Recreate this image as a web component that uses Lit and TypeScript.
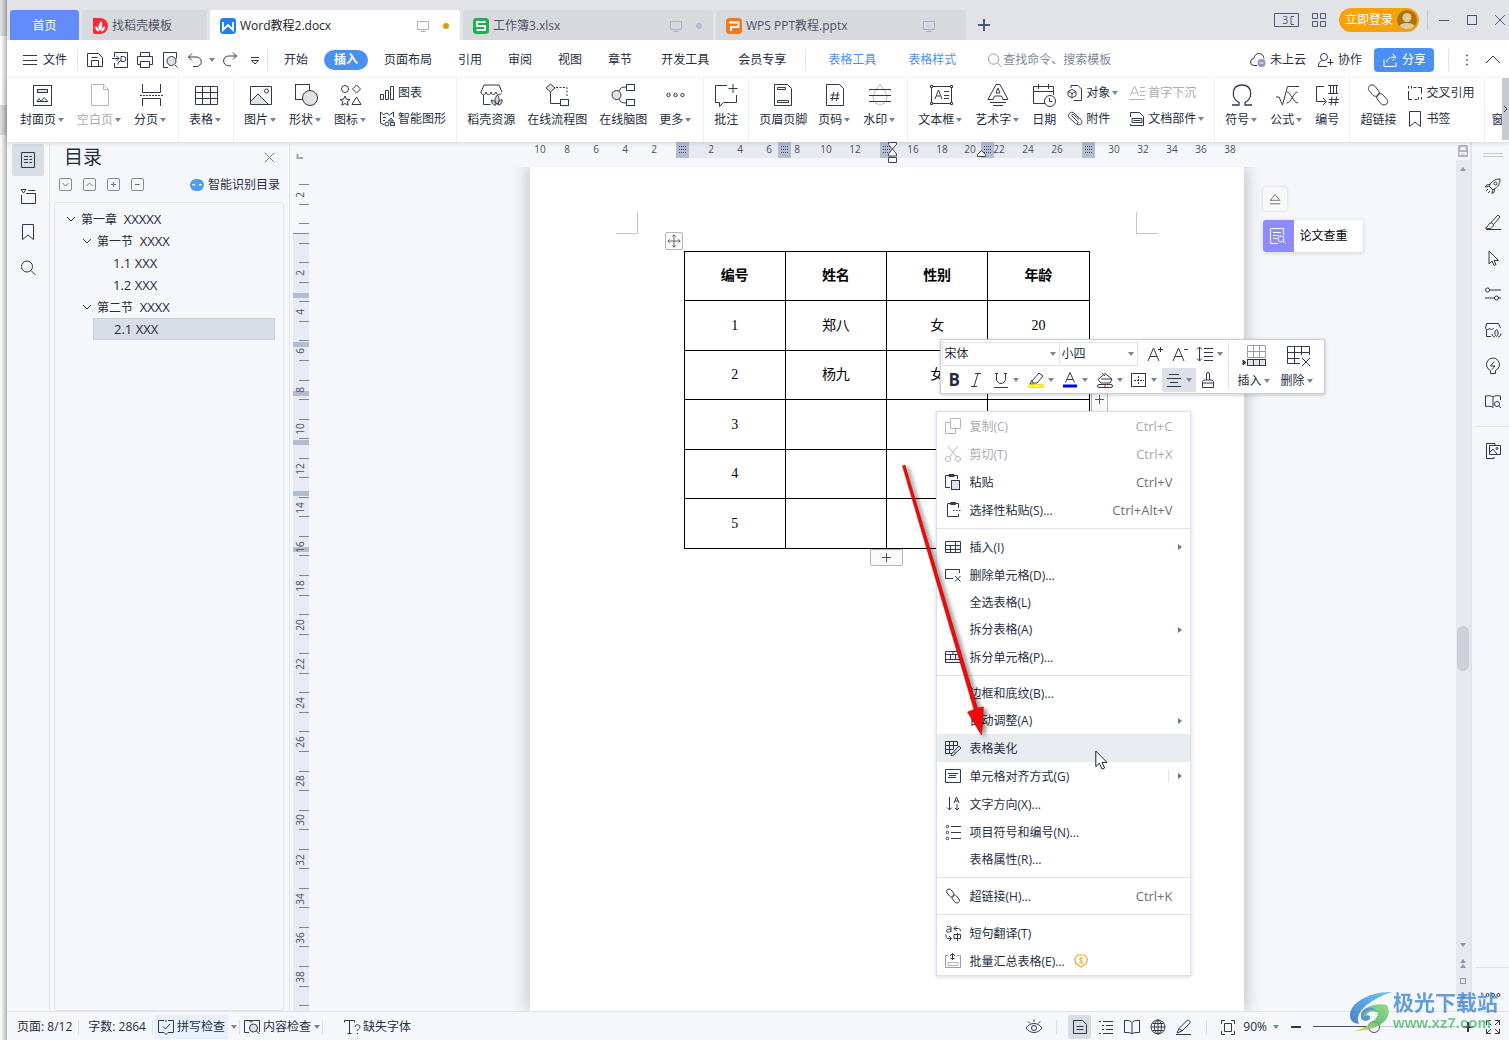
import { LitElement, html, svg, css, nothing, TemplateResult } from "lit";
import { customElement } from "lit/decorators.js";
import { classMap } from "lit/directives/class-map.js";

type Glyph = ReturnType<typeof svg>;

/* Large ribbon glyphs, drawn on a 24 x 24 grid */
const big: Record<string, Glyph> = {
  cover: svg`<rect x="2.5" y="2.5" width="18" height="20"/><rect x="6.5" y="6.5" width="10" height="3" fill="#dfe1e5"/><path d="M6 18.5h4l-2-3-2 3M10 18.5l3-4 4 4z"/>`,
  blank: svg`<path d="M3.5 1.5h12l5 5v16h-17zM15.5 1.5v5h5" stroke="#b4b6ba"/>`,
  pagebreak: svg`<path d="M3.5 1v8.500h18V1M3.5 23v-7.500h18V23"/><path d="M1 12.5h23" stroke-dasharray="2 1"/>`,
  table: svg`<path d="M1.5 3.5h22v18h-22zM1.5 9.5h22M1.5 15.5h22M8.5 9.5v12M16.5 3.5v18M8.5 3.5v6"/>`,
  picture: svg`<path d="M2 18l7-7 10 10H2z" fill="#dfe1e5" stroke="none"/><path d="M1.5 3.5h21v18h-21zM2 18l7-7 10 10"/><circle cx="17.5" cy="8" r="2"/>`,
  shapes: svg`<rect x="1.5" y="1.5" width="14" height="15"/><circle cx="16" cy="15" r="7.5" fill="#dfe1e5"/>`,
  icons: svg`<circle cx="6" cy="6" r="3.5"/><path d="M17.5 2l4 4-4 4-4-4zM17.5 14l4.5 7.500h-9zM6 13l1.500 3.200 3.500.3-2.700 2.300.9 3.500L6 20.500l-3.200 1.800.9-3.500L1 16.500l3.500-.3z"/>`,
  store: svg`<path d="M4.500 12v9.500h7M2 9l3-7h15l3 7M2 9c0 3.500 5 3.500 5 0 0 3.500 5 3.500 5 0 0 3 4 3.500 5 0 0 3 5 3.500 5.500 1"/><path d="M18 21c-3-2-2.500-6 .5-9 2 3 2.500 6-.5 9zM17 22c-3 .5-4.500-2-4.500-5 3 .5 4.500 2 4.500 5zM19 22c0-3 1.500-5 4-5.500.5 3-1 5.500-4 5.500z" fill="#d4d6db"/>`,
  flow: svg`<path d="M5.500 1l4.500 4-4.500 4L1 5z" fill="#dfe1e5"/><path d="M5.500 9v11.500h10"/><path d="M11 4.500h11v10" stroke-dasharray="2 1.500"/><rect x="15.500" y="16.500" width="8" height="6"/>`,
  mind: svg`<circle cx="5.500" cy="12" r="4.500" fill="#dfe1e5"/><path d="M8 8c1-3 3-4 7-4M8 16c1 3 3 4 7 4"/><rect x="15.500" y="1.500" width="8" height="6"/><rect x="15.500" y="16.500" width="8" height="6"/>`,
  more: svg`<circle cx="4.500" cy="12" r="1.700"/><circle cx="11.500" cy="12" r="1.700"/><circle cx="18.500" cy="12" r="1.700"/>`,
  comment: svg`<path d="M13 2.500H1.500v17h4v4l4-4h13V12M19 1v9M14.500 5.500h9"/>`,
  header: svg`<path d="M3.500 1.500h13l4 4v17h-17z"/><path d="M6.500 4.500h8v2h-8zM6.500 17.500h11v2h-11z"/>`,
  pageno: svg`<path d="M3.500 1.500h13l4 4v17h-17z"/><path d="M10.500 9l-1.500 9M15 9l-1.500 9M7.500 12h9M7 15.500h9"/>`,
  watermark: svg`<path d="M12 1c3 5 7 9 7 13.500a7 7 0 0 1-14 0C5 10 9 6 12 1z" stroke="#b4b6ba"/><path d="M1 6.500h22M1 12.500h22M1 18.500h22"/>`,
  textbox: svg`<rect x="2.500" y="3.500" width="20" height="17"/><path d="M1.500 2.500h2v2h-2zM21.500 2.500h2v2h-2zM1.500 19.500h2v2h-2zM21.500 19.500h2v2h-2z" fill="#fff"/><path d="M6 16l3.500-9L13 16M7.500 13h4M15 8.500h5M15 12.500h5M15 15.500h5"/>`,
  wordart: svg`<path d="M2 16.500L10 1.500h4l8 15h-5l-1.500-3.500h-7L7 16.500zM10 10l2-5 2 5zM4 19.500h16M7 22.500h10"/>`,
  date: svg`<path d="M14 20.500H1.500v-17h20V12M1.500 8.500h20M6.500 1v5M16.500 1v5"/><circle cx="18" cy="18" r="5.500" fill="#fff"/><path d="M17.500 15v3.500h3"/>`,
  omega: svg`<path d="M2 22h7v-2.500C1 16 1 2 12 2s11 14 3 17.500V22h7" stroke-width="1.300"/>`,
  formula: svg`<path d="M1 14h3l3.500 8L12.500 3.500H24M12 9c4 0 6 11 11 11M22.500 9c-4 0-6 11-11 11"/>`,
  numbering: svg`<path d="M9 3.500H1.500v15h9M8 15l3.500 3.500L8 22M13 2.500h10M13 10.500h10M15.500 2.500v8M18.500 2.500v8M21.500 2.500v8M17 13.500l-1 9M21.500 13.500l-1 9M14 16.500h10M13.500 19.500h10"/>`,
  link: svg`<path d="M12.500 12.500c-2 1.500-4.500 1-6-1L3 7.500C1.500 5 3 2 6 2c1.500 0 2.500.6 3.300 1.600l3.200 4c1 1.500 1 3 0 4.500M11.500 11.500c2-1.500 4.500-1 6 1l3.500 4c1.500 2.500 0 5.500-3 5.500-1.500 0-2.500-.6-3.300-1.600l-3.200-4c-1-1.500-1-3 0-4.500"/>`,
  insertrow: svg`<path d="M4.500 2.500h18v12h-18zM4.500 8.500h18M10.500 2.500v12M16.500 2.500v12" stroke="#9a9ea8"/><rect x="4.500" y="16.500" width="18" height="6" fill="#e3e5e8"/><path d="M10.500 16.500v6M16.500 16.500v6"/><path d="M0 17l3 2.500L0 22z" fill="#2f384c"/>`,
  delrow: svg`<path d="M14 20.500H1.500v-17h22V12M1.500 9.500h22M1.500 15.500h12M8.500 3.500v17M15.500 3.500V12M16 15l8 8M24 15l-8 8"/>`,
};

/* Small glyphs, drawn on a 16 x 16 grid */
const small: Record<string, Glyph> = {
  burger: svg`<path d="M1 3.500h14M1 8.500h14M1 12.500h14"/>`,
  save: svg`<path d="M.500 14.500V1.500h11l4 4v9zM4.500 14.500v-6h7v6M4.500 5.500h6"/>`,
  export: svg`<path d="M2.500 5V.500h13v15h-13V11M0 6.500h7M4.500 4L7 6.500 4.500 9M6 12.500V11l3-3M9 4.500h2.500a2 2 0 0 1 0 5H9z"/>`,
  print: svg`<path d="M3.500 4V.500h9V4M3.500 12.500H.500v-8h15v8h-3M3.500 9.500h9v6h-9z"/>`,
  preview: svg`<path d="M6 15.500H1.500V.500h13v6M13 13l2.500 2.500"/><circle cx="9.500" cy="9" r="4.500" fill="#dfe1e5"/>`,
  undo: svg`<path d="M5 1.500L1.500 5 5 8.500M1.500 5h8a4.500 4.500 0 0 1 0 9.500H6"/>`,
  redo: svg`<path d="M11 .500L14.500 4 11 7.500M14.500 4h-8a4.800 4.800 0 0 0 0 9.800H9"/>`,
  more: svg`<path d="M4 5.500h8M4.500 8.500L8 12l3.500-3.500z"/>`,
  search: svg`<circle cx="7" cy="6.500" r="5.500"/><path d="M11 10.500l4.500 4.500"/>`,
  cloud: svg`<path d="M7 13.500H4a3.500 3.500 0 0 1 0-7C4.500 3 6.500 1.500 9 1.500c3 0 4.500 2 5 5"/><circle cx="11.500" cy="11" r="4" fill="#8d9bb5" stroke="none"/><path d="M9.500 11h4" stroke="#fff"/>`,
  coop: svg`<circle cx="6" cy="5" r="3.500"/><path d="M9 14.500H.500c0-4 1.500-5.500 4-6M12.500 7v6M9.500 10.500h6"/>`,
  share: svg`<path d="M2 7.500v7h12v-4M4.500 10.500C5 6.500 8 5 13 5M10.500 2L14 5l-3.500 3.500"/>`,
  chart: svg`<path d="M1.500 9.500h3v5h-3zM6.500 5.500h3v9h-3zM11.500 1.500h3v13h-3z"/>`,
  smart: svg`<path d="M1.500 1l3 2.500L8 2l2.500 2L14.500 1v5M1.500 1v11l4 2M4 6.500h3M4 9.500h2"/><circle cx="8" cy="13" r="2"/><path d="M12 7l2.500 3H9.500zM11.500 11.500h4v3h-4z" fill="#dfe1e5"/>`,
  object: svg`<path d="M4 3V.500h7l3.500 3.500v11.500h-8M5 4.500l4 2v4l-4 2.500-4-2.500v-4zM1 6.500l4 2 4-2M5 8.500V13"/>`,
  clip: svg`<path d="M5 5l5.500 5.500c1.500 1.500-.5 3.500-2 2L2.500 7C-.500 3.500 4-.500 7 2l7 6.500c2.500 3-1 7-4 4.500M5 5c-1-1 .5-2.500 1.500-1.500L12 8.500"/>`,
  dropcap: svg`<path d="M1 11L5.500 1 10 11M2.500 8h6M11 2.500h5M11 6.500h5M11 10.500h5M0 14.500h16"/>`,
  docpart: svg`<path d="M1.500 6V1.500h9l4 4v9h-13V13M4.500 9.500h7M3 7.500h10v4H3z"/>`,
  xref: svg`<path d="M1.500 6v8.500H5M7.500 14.500h3M11 2.500h3.500v6M1.500 1v2.500M4.500 1v2.500M6.500 2.500h3M11.500 12v2.500M14.500 12v2.500"/>`,
  bookmark: svg`<path d="M2.500 .500h11v15L8 11l-5.500 4.500z"/>`,
  close: svg`<path d="M3 3l10 10M13 3L3 13"/>`,
  outline: svg`<path d="M1.500 .500h13v15h-13zM4 4.500h4M4 7.500h4M4 10.500h4M9.500 4.500h2.500M9.500 7.500h2.500M9.500 10.500h2.500"/>`,
  sections: svg`<path d="M1 1.500h5L3.500 5zM1.500 7v8.500h14v-10H6M8.500 2.500h7"/>`,
  rocket: svg`<path d="M4 8C7 3 10 1 15 1c0 5-2 8-7 11zM5 6.500L1.500 7 .500 9l3-.5M9.500 11l-.5 3.500-2 1 .5-3M1 13l2-2M3 15l2-2"/><circle cx="10.500" cy="5.500" r="1.500"/>`,
  pen: svg`<path d="M1 15.500h15M13 1l2 2-6.500 7.500-2.500-2zM6 9c-3 0-2.500 4-5.500 5 3 1 7 1 8-3"/>`,
  pointer: svg`<path d="M4 1v13l3-3 2 4.500 2-1L9 10.500h4.500z"/>`,
  sliders: svg`<circle cx="2.500" cy="4" r="2"/><circle cx="11.500" cy="12" r="2"/><path d="M4.500 4H16M0 12h9.500M13.500 12H16"/>`,
  shop: svg`<path d="M1.500 7.500v7H6M.500 6l1-4.500h12L15.500 6M.500 6c.5 2 3.500 2 4 0 .5 2 3.500 2 4 0"/><path d="M11.500 14.500c-2.500-2-2-5 0-7 2 2 2.500 5 0 7zM10 15c-2 0-3-1.500-3-3M13 15c2 0 3-1.500 3-3.500" fill="#dfe1e5"/>`,
  idea: svg`<path d="M5.500 12.500a6.500 6.500 0 1 1 5 0v3h-5zM9 3.500L5.500 8h4.500L7 11.500"/>`,
  bookfind: svg`<path d="M8 13.500c-2-1.500-5-1.500-7.500-1V2c3-.5 6-.5 7.500 1 1.500-1.500 4.500-1.500 7.500-1v4M8 3v10.500"/><circle cx="12" cy="10" r="2.500"/><path d="M14 12l2 2"/>`,
  album: svg`<path d="M4.500 2.500h11v9h-11zM5 9l3-3 4 5M9 14v1.500H1.500V.500H10V2"/><circle cx="12" cy="5.500" r="1"/>`,
  dots: svg`<circle cx="2.500" cy="8" r="1.500"/><circle cx="8" cy="8" r="1.500"/><circle cx="13.500" cy="8" r="1.500"/>`,
  paper: svg`<path d="M8 15.500H.500V.500h13V7M3 4.500h8M3 7.500h6M3 10.500h4"/><circle cx="11" cy="11" r="3"/><path d="M13 13l2.500 2.500"/>`,
  eject: svg`<path d="M2.500 9.500h11L8 3zM2 13.500h12"/>`,
  copy: svg`<path d="M5.500 .500h10v10h-10zM5.500 4.500h-5v11h10v-5"/>`,
  cut: svg`<path d="M3 0l8.500 11M13 0L4.500 11"/><circle cx="3" cy="13" r="2.500"/><circle cx="13" cy="13" r="2.500"/>`,
  paste: svg`<path d="M5 13.500H.500V1.500h12V5M4 .500h5v2H4z"/><rect x="6.500" y="6.500" width="8" height="9" fill="#e3e5e8"/>`,
  pastesp: svg`<path d="M13.500 6V1.500h-11v13h11V12M5.500 .500h5v2h-5zM8 8.500h1.500M11 8.500h1.500M14 8.500h1.500"/>`,
  grid: svg`<path d="M.500 2.500h15v11H.500zM.500 6.500h15M.500 10.500h15M5.500 6.500v7M10.500 2.500v11"/>`,
  delcell: svg`<path d="M8 11.500H.500v-9h14V6M10 9l5.500 5.500M15.500 9L10 14.500"/>`,
  split: svg`<path d="M.500 2.500h15v11H.500zM.500 5.500h15M.500 10.500h15M5.500 5.500v5M10.500 5.500v5M8 2.500v3"/>`,
  beauty: svg`<path d="M7 13.500H.500v-12h12V6M.500 5.500h12M.500 9.500h8M4.500 1.500v12M8.500 1.500v8M14 6l2 2-6 5.500-1.500-1.500zM8 12c-1 .5-1 2-2 3.500 2 0 3.500-.5 4-2"/>`,
  cellalign: svg`<path d="M.500 1.500h15v13H.500zM3 5.500h10M4 7.500h7M3 9.500h8"/>`,
  direction: svg`<path d="M4.500 1v13M2 11.500L4.500 14 7 11.500M12 8v6M10 12l2 2 2-2M9 7l2.500-6L14 7M10 5h3.500"/>`,
  list: svg`<circle cx="2.500" cy="2.500" r="1.200"/><circle cx="2.500" cy="8.500" r="1.200"/><circle cx="2.500" cy="14.500" r="1.200"/><path d="M6 2.500h10M6 8.500h10M6 14.500h10"/>`,
  translate: svg`<path d="M2 2c2-1.500 4-.5 4 1v4M6 4C3 4 1.500 4.500 1.500 6S4.500 7.500 6 6M9 3.500h4.500c1 0 2 .8 2 2.500M11.500 1L9 3.500 11.500 6M1 9.500v2c0 1 .8 2 2 2h3M4 11l2.500 2.500L4 16M9 9.500h6.500v4H9zM12.500 8v8"/>`,
  batch: svg`<path d="M3.500 2.500H.500v12h15v-12h-4" stroke="#9a9ea8"/><path d="M3 9.500h10v3H3z" stroke="#b4b6ba"/><path d="M7.500 7V.500M5 3L7.500.500 10 3M5.500 5.500h4"/>`,
  linkS: svg`<path d="M8.500 8.500c-1.500 1-3 .8-4-.5L2 5C1 3.500 2 1 4 1c1 0 1.800.4 2.300 1L8.500 5c.6 1 .6 2 0 3M7.500 7.500c1.500-1 3-.8 4 .5l2.500 3c1 1.500 0 4-2 4-1 0-1.800-.4-2.300-1L7.500 11c-.6-1-.6-2 0-3"/>`,
  spell: svg`<path d="M6 1.500H.500v12H6l2 2 2-2h5.500v-12H10M5 7.500l2.500 2.500L12 5M8 3V1"/>`,
  content: svg`<path d="M5 13.500H.500v-12h15V13M5 1.500L7 3.500l2-2"/><circle cx="9.500" cy="9" r="4" fill="#dfe1e5"/><path d="M12.500 12l3 3"/>`,
  missing: svg`<path d="M.500 3.500v-2h10v2M5.500 1.500v13M3.500 14.500h4M11 8c0-3 5-3 5 0 0 1.500-2.500 2-2.500 4M13.500 14v1.200"/>`,
  eye: svg`<path d="M0 9c4-6 12-6 16 0-4 6-12 6-16 0zM2 2.500L4 4.500M8 .500V3M14 2.500L12 4.500"/><circle cx="8" cy="9" r="2.500"/>`,
  pageview: svg`<path d="M1.500 1.500h9l4 4v9h-13zM4.500 7.500h7M4.500 10.500h7"/>`,
  listview: svg`<path d="M1 2.500h2M5 2.500h10M4 6.500h2M8 6.500h7M4 10.500h2M8 10.500h7M1 14.500h2M5 14.500h10"/>`,
  book: svg`<path d="M8 3.500c-1-2-4-2-7.500-2v12c3.500 0 6.500 0 7.500 1.500 1-1.500 4-1.500 7.500-1.500v-12c-3.500 0-6.500 0-7.500 2V15"/>`,
  globe: svg`<circle cx="8" cy="8" r="7"/><ellipse cx="8" cy="8" rx="3.500" ry="7"/><path d="M1 8h14M8 1v14M2.500 4.500h11M2.500 11.500h11"/>`,
  writer: svg`<path d="M0 15.500h15M1 14l2-4.500 8-8c1.500-1 4 1 3 2.500l-8 8zM3 9.500l3 2.500"/>`,
  fit: svg`<path d="M4.500 4.500h7v8h-7zM1.500 5V1.500H5M11 1.500h3.500V5M14.500 12v3.500H11M5 15.500H1.500V12"/>`,
  full: svg`<path d="M1.500 6V1.500H6M10 1.500h4.500V6M14.500 10v4.500H10M6 14.500H1.500V10M1.500 1.500L6 6M14.500 1.500L10 6M14.500 14.500L10 10M1.500 14.500L6 10"/>`,
  italic: svg`<path d="M7 1.500h6M3 14.500h6M10 1.500l-4 13"/>`,
  underline: svg`<path d="M3.500 1v6a4.500 4.500 0 0 0 9 0V1M1 15.500h14M2 1.500h3M11 1.500h3"/>`,
  marker: svg`<path d="M4 9l7-8 4 3-6 7H5zM4 8L2 12h4"/><rect x="0" y="12.500" width="16" height="3" rx="1.500" fill="#ffff00" stroke="#c9c92a" stroke-width=".6"/>`,
  fontcolor: svg`<path d="M3.500 10.500L8 .500l4.500 10M5 7.500h6"/><rect x="1" y="12.500" width="14" height="3" fill="#0000ff" stroke="none"/>`,
  bucket: svg`<path d="M1 7.500l7-6L15 7l-2 4H4zM4 7h11M5 1l3 3"/><rect x=".500" y="12.500" width="15" height="3" rx="1.500" fill="#fff"/><path d="M7 15l4-4" stroke="#e33"/>`,
  borders: svg`<rect x=".500" y="1.500" width="14" height="13"/><path d="M3 8.500h10M7.500 4v9" stroke-dasharray="2 1"/>`,
  align: svg`<path d="M3 2.500h10M1 6.500h14M4 10.500h8M1 14.500h14"/>`,
  brush: svg`<path d="M6.500 8V2a1.500 1.500 0 0 1 3 0v6M2.500 10.500c0-2 1-2.500 2.500-2.500h6c1.500 0 2.500.5 2.500 2.500v5h-11zM2.500 11h11"/>`,
  bigger: svg`<path d="M1 15L6.500 2 12 15M3 10.500h7M11 3.500h5M13.500 1v5"/>`,
  smaller: svg`<path d="M1 15L6.500 2 12 15M3 10.500h7M12 3.500h4"/>`,
  spacing: svg`<path d="M2.500 1v14M0 3.500L2.500 1 5 3.500M0 12.500L2.500 15 5 12.500M7 2.500h9M7 6.500h9M7 10.500h9M7 14.500h9"/>`,
  move: svg`<path d="M8 1v14M1 8h14M6 3l2-2 2 2M6 13l2 2 2-2M3 6L1 8l2 2M13 6l2 2-2 2"/>`,
  screen: svg`<path d="M2.500 3.500h11v8h-11zM8 11.500v2M5.500 13.500h5"/>`,
  min: svg`<path d="M3 8.500h10"/>`,
  max: svg`<rect x="3.500" y="3.500" width="9" height="9"/>`,
  apps: svg`<path d="M1.500 1.500h5v5h-5zM9.500 1.500h5v5h-5zM1.500 9.500h5v5h-5zM9.500 9.500h5v5h-5z"/>`,
  kebab: svg`<path d="M8 1v2M8 7v2M8 13v2" stroke-width="2"/>`,
  up: svg`<path d="M1 11l7-7 7 7"/>`,
  down: svg`<path d="M4 6l4 4 4-4"/>`,
};

const ic = (name: string, size = 16): TemplateResult =>
  html`<svg class="ic" aria-hidden="true" width=${size} height=${size} viewBox="0 0 16 16">${small[name]}</svg>`;
const ib = (name: string): TemplateResult =>
  html`<svg class="ic" aria-hidden="true" width="24" height="24" viewBox="0 0 24 24">${big[name]}</svg>`;
const caret = html`<i class="caret"></i>`;

interface Tool { icon: string; label: string; drop?: boolean; off?: boolean; }
const t = (icon: string, label: string, drop = false, off = false): Tool => ({ icon, label, drop, off });

/* Each ribbon group is a list of large tools and of stacks of small ones */
const ribbon: (Tool | Tool[])[][] = [
  [t("cover", "封面页", true), t("blank", "空白页", true, true), t("pagebreak", "分页", true)],
  [t("table", "表格", true)],
  [t("picture", "图片", true), t("shapes", "形状", true), t("icons", "图标", true), [t("chart", "图表"), t("smart", "智能图形")]],
  [t("store", "稻壳资源"), t("flow", "在线流程图"), t("mind", "在线脑图"), t("more", "更多", true)],
  [t("comment", "批注")],
  [t("header", "页眉页脚"), t("pageno", "页码", true), t("watermark", "水印", true)],
  [t("textbox", "文本框", true), t("wordart", "艺术字", true), t("date", "日期"),
    [t("object", "对象", true), t("clip", "附件")],
    [t("dropcap", "首字下沉", false, true), t("docpart", "文档部件", true)]],
  [t("omega", "符号", true), t("formula", "公式", true), t("numbering", "编号")],
  [t("link", "超链接"), [t("xref", "交叉引用"), t("bookmark", "书签")]],
];

interface MenuRow { label: string; icon?: string; keys?: string; sub?: boolean; off?: boolean; hot?: boolean; bar?: boolean; coin?: boolean; }
const menu: (MenuRow | null)[] = [
  { label: "复制(C)", icon: "copy", keys: "Ctrl+C", off: true },
  { label: "剪切(T)", icon: "cut", keys: "Ctrl+X", off: true },
  { label: "粘贴", icon: "paste", keys: "Ctrl+V" },
  { label: "选择性粘贴(S)...", icon: "pastesp", keys: "Ctrl+Alt+V" },
  null,
  { label: "插入(I)", icon: "grid", sub: true },
  { label: "删除单元格(D)...", icon: "delcell" },
  { label: "全选表格(L)" },
  { label: "拆分表格(A)", sub: true },
  { label: "拆分单元格(P)...", icon: "split" },
  null,
  { label: "边框和底纹(B)..." },
  { label: "自动调整(A)", sub: true },
  { label: "表格美化", icon: "beauty", hot: true },
  { label: "单元格对齐方式(G)", icon: "cellalign", sub: true, bar: true },
  { label: "文字方向(X)...", icon: "direction" },
  { label: "项目符号和编号(N)...", icon: "list" },
  { label: "表格属性(R)..." },
  null,
  { label: "超链接(H)...", icon: "linkS", keys: "Ctrl+K" },
  null,
  { label: "短句翻译(T)", icon: "translate" },
  { label: "批量汇总表格(E)...", icon: "batch", coin: true },
];

const tree = [
  { level: 0, text: "第一章  XXXXX", open: true },
  { level: 1, text: "第一节  XXXX", open: true },
  { level: 2, text: "1.1 XXX" },
  { level: 2, text: "1.2 XXX" },
  { level: 1, text: "第二节  XXXX", open: true },
  { level: 2, text: "2.1 XXX", selected: true },
];

const people = [["1", "郑八", "女", "20"], ["2", "杨九", "女", ""], ["3", "", "", ""], ["4", "", "", ""], ["5", "", "", ""]];

const hMarks: [number, number][] = [[10, 231], [8, 258], [6, 287], [4, 316], [2, 345], [2, 402], [4, 431], [6, 460], [8, 488], [10, 517], [12, 546],
  [16, 604], [18, 633], [20, 661], [22, 690], [24, 719], [26, 748], [30, 805], [32, 834], [34, 863], [36, 892], [38, 921]];

@customElement("app-root")
export class AppRoot extends LitElement {
  static styles = css`
    :host { display: block; font: 12px/16px "Open Sans", "Noto Sans CJK SC", sans-serif; color: #252d40; --line: #e1e4eb; --bg: #f5f7fa; }
    * { box-sizing: border-box; }
    button, input, select { font: inherit; color: inherit; background: none; border: 0; padding: 0; margin: 0; }
    button { display: inline-flex; align-items: center; justify-content: center; white-space: nowrap; }
    .ic { fill: none; stroke: #2f384c; stroke-width: 1; flex: none; display: block; overflow: visible; }
    .caret { border: 3px solid transparent; border-top: 4px solid #76839c; border-bottom: 0; flex: none; }
    .root { position: relative; display: grid; grid-template-columns: 7px minmax(0, 1fr); min-height: 100vh; overflow: hidden; background: var(--bg); }
    .behind { background: linear-gradient(90deg, transparent 1px, rgba(0,0,0,.28)), linear-gradient(#dedfe2 36px, #fff 36px, #fff 105px, #dcdcde 105px, #dcdcde 135px, #f8f8f8 135px); }
    .app { display: grid; grid-template-rows: 40px 38px 64px minmax(0, 1fr) 29px; min-width: 0; height: 100vh; min-height: 700px; }

    .titlebar { display: flex; align-items: flex-end; background: #e2e3e7; padding-left: 3px; gap: 3px; }
    .tab { height: 30px; flex: 0 1 250px; justify-content: flex-start; gap: 4px; padding: 2px 8px 0 10px; background: #d8d9dc; border-radius: 3px 3px 0 0; color: #4a5266; }
    .tab.home { flex-basis: 69px; background: #628cfa; color: #fff; justify-content: center; padding: 2px 0 0; }
    .tab.store { flex-basis: 125px; }
    .tab.on { background: #fff; color: #161c2c; }
    .tab .logo { flex: none; }
    .tab .name { flex: 1; text-align: left; }
    .tab .screen .ic { stroke: #aab3cc; }
    .tab .dot { width: 6px; height: 6px; border-radius: 50%; background: #b3bdd8; margin: 0 3px 0 8px; }
    .tab.on .dot { background: #e59a0b; }
    .tab .dot.none { background: none; }
    .tab .mono { width: 16px; height: 16px; border-radius: 3px; }
    .plus { width: 30px; height: 30px; }
    .plus .ic { stroke-width: 2; stroke: #4a5a78; }
    .wm { margin-left: auto; height: 40px; display: flex; align-items: center; gap: 12px; }
    .wm .ic { stroke: #4a5a78; }
    .tail { display: flex; align-items: center; gap: 8px; }
    .login { background: #f5a20b; color: #fff; height: 24px; border-radius: 12px; padding: 0 2px 0 6px; gap: 4px; }
    .vr { width: 1px; height: 20px; background: #c9ccd3; }
    .sysbtns { display: flex; gap: 12px; overflow: hidden; width: 73px; }

    .menubar { display: flex; align-items: center; background: #fff; padding: 2px 0 0 15px; }
    .menubar .file { gap: 5px; padding-right: 10px; }
    .menubar .q { width: 25px; height: 24px; }
    .menubar .q.s { width: 10px; }
    .quick { display: flex; align-items: center; padding: 0 0 0 4px; }
    .vline { width: 1px; height: 22px; background: #dfe2e8; flex: none; }
    .menutabs { display: flex; align-items: center; gap: 26px; padding: 0 19px 0 16px; }
    .menutabs .long { padding-left: 3px; }
    .menutabs .pill { background: #4a90f0; color: #fff; font-weight: 700; border-radius: 10px; height: 20px; padding: 0 10px; margin: 0 -10px; }
    .ctx { color: #4b8ff2; display: flex; gap: 32px; padding: 0 31px 0 22px; }
    .find { display: flex; align-items: center; gap: 1px; flex: 1 1 140px; min-width: 0; }
    .find .ic { stroke: #8a94ab; }
    .find input { width: 130px; outline: 0; }
    .find input::placeholder { color: #7d879c; opacity: 1; }
    .cloudside { display: flex; align-items: center; gap: 12px; padding-right: 8px; }
    .cloudside button { gap: 4px; }
    .cloudside .share { background: #4a90f2; color: #fff; width: 60px; height: 24px; border-radius: 4px; margin-right: 2px; }
    .share .ic { stroke: #fff; }

    .ribbon { display: flex; background: #fff; padding-left: 3px; overflow: hidden; position: relative; z-index: 3; box-shadow: 0 1px 4px rgba(40,50,80,.18); }
    .group { display: flex; gap: 11px; padding: 0 10px; border-right: 1px solid #eceef2; flex: none; }
    .group.wide { gap: 12px; }
    .tool { flex-direction: column; justify-content: flex-start; height: 58px; padding-top: 5px; gap: 5px; }
    .lab { display: flex; align-items: center; gap: 1px; line-height: 16px; }
    .lab .caret { margin: 0 2px 0 1px; }
    .off { color: #a8aab0; }
    .off .ic { stroke: #b4b6ba; }
    .stack { display: flex; flex-direction: column; gap: 10px; padding-top: 7px; align-items: flex-start; }
    .stack button { gap: 3px; }
    .stack .caret { margin-right: 0; }
    .cutoff { flex: 1 1 0; min-width: 0; overflow: hidden; padding: 34px 0 0 6px; line-height: 16px; white-space: nowrap; }
    .scroller { width: 7px; background: #c9cad0; flex: none; margin-bottom: 2px; }

    .work { display: grid; grid-template-columns: 43px 240px 19px minmax(0, 1fr) 14px 39px; min-height: 0; }
    .rail { display: flex; flex-direction: column; align-items: center; border-right: 1px solid var(--line); padding-top: 2px; gap: 4px; }
    .rail button { width: 32px; height: 32px; border-radius: 2px; }
    .rail button.on { background: #d9dde5; }
    .panel { display: flex; flex-direction: column; padding: 4px 5px 0 4px; border-right: 1px solid var(--line); min-height: 0; }
    .phead { display: flex; align-items: center; justify-content: space-between; padding: 0 7px 0 10px; height: 22px; }
    .phead h2 { font-size: 19px; line-height: 22px; font-weight: 400; margin: 0; }
    .phead .ic { stroke: #6c7690; }
    .ptools { display: flex; align-items: center; gap: 11px; height: 34px; padding: 0 4px 2px 5px; }
    .sq { width: 13px; height: 13px; border: 1px solid #858b98; border-radius: 2px; }
    .sq .ic { stroke: #6c7280; }
    .ai { margin-left: auto; gap: 4px; padding-top: 2px; }
    .tree { flex: 1; border: 1px solid var(--line); border-radius: 3px; margin: 0; padding: 5px 8px; list-style: none; font-size: 13px; }
    .tree li { display: flex; align-items: center; height: 22px; white-space: pre; gap: 2px; }
    .tree .zh { font-size: 12px; }
    .l1 { margin-left: 16px; }
    .l2 { margin-left: 30px; }
    .tree li.l2 { padding-left: 20px; }
    .tree .sel { background: #d9dde6; border: 1px solid #c8d0dc; }

    .vruler { overflow: hidden; }
    .rul { display: block; font: 10px "Open Sans", sans-serif; fill: #454f66; }
    .canvas { display: grid; grid-template-rows: 25px minmax(0, 1fr); min-width: 0; min-height: 0; overflow: hidden; }
    .hruler { overflow: hidden; }
    .desk { display: grid; grid-template-columns: minmax(0, 1fr) 714px minmax(0, 1fr); padding-left: 8px; overflow: hidden; }
    .sheet { grid-column: 2; position: relative; background: #fff; box-shadow: 0 0 16px 2px rgba(0,0,0,.22); display: flex; flex-direction: column; align-items: center; padding-top: 84px; }
    .corner { position: absolute; top: 45px; width: 22px; height: 22px; border-bottom: 1px solid #c4c4c4; }
    .corner.a { left: 86px; border-right: 1px solid #c4c4c4; }
    .corner.b { right: 86px; border-left: 1px solid #c4c4c4; }
    .tw { position: relative; }
    .people { border-collapse: collapse; font: 14px/20px "Liberation Serif", "Noto Sans CJK SC", serif; color: #000; width: 406px; table-layout: fixed; text-align: center; }
    .people th, .people td { border: 1px solid #000; height: 49px; padding: 0; }
    .people tr.h td { height: 50px; }
    .knob { position: absolute; border: 1px solid #b5b5b5; background: #fafafa; }
    .knob .ic { stroke: #555; }
    .knob.m { left: -19px; top: -19px; width: 18px; height: 18px; border-radius: 2px; }
    .knob.r { left: 407px; top: 138px; width: 17px; height: 34px; padding-bottom: 18px; align-items: flex-end; }
    .knob.b { left: 186px; bottom: -17px; width: 33px; height: 17px; border-radius: 0 0 2px 2px; }
    .side { padding: 20px 0 0 19px; display: flex; flex-direction: column; gap: 9px; align-items: flex-start; position: relative; }
    .side .ej { width: 24px; height: 24px; border-radius: 3px; background: #f7f7f8; box-shadow: 0 0 3px rgba(0,0,0,.15); }
    .side .ej .ic { stroke: #666; }
    .side .dup { height: 32px; width: 100px; background: #fff; border-radius: 3px; overflow: hidden; justify-content: flex-start; color: #000; box-shadow: 0 1px 5px rgba(0,0,0,.15); gap: 6px; }
    .dup span { background: #8c8cff; width: 31px; height: 32px; display: grid; place-items: center; }
    .dup .ic { stroke: #fff; }

    .mini { position: absolute; z-index: 4; left: 410px; top: 172px; display: flex; background: #fff; border: 1px solid #c8cbd2; box-shadow: 0 1px 4px rgba(0,0,0,.2); padding: 1px; width: 385px; height: 55px; }
    .mrows { width: 287px; border-right: 1px solid var(--line); margin-bottom: 2px; }
    .mr { display: flex; align-items: center; height: 25px; gap: 9px; }
    .combo { position: relative; display: block; height: 24px; border: 1px solid #dfe2ea; width: 118px; margin-right: -10px; }
    .combo.s { width: 79px; margin-right: 0; }
    .combo select { appearance: none; width: 100%; height: 22px; padding-left: 2px; outline: 0; }
    .combo .caret { position: absolute; right: 3px; top: 9px; pointer-events: none; }
    .mr.two { padding: 0 11px 0 7px; gap: 0; justify-content: space-between; height: 27px; }
    .mr button { gap: 4px; height: 24px; }
    .mr .act { background: #dce0e7; padding: 0 4px; border-radius: 2px; margin: 0 -4px; }
    .bold { font: 700 17px/20px "Open Sans", sans-serif; }
    .mbig { display: flex; gap: 9px; padding: 2px 0 0 9px; }
    .mbig .tool { height: 50px; padding-top: 0; gap: 6px; }

    .cmenu { position: absolute; z-index: 4; left: 406px; top: 244px; width: 255px; background: #fff; border: 1px solid #dbe0ea; box-shadow: 0 1px 4px rgba(60,80,120,.22); margin: 0; padding: 0; list-style: none; }
    .cmenu button { display: flex; justify-content: flex-start; width: 100%; height: 27px; padding: 0 8px 0 33px; }
    .cmenu button.i { height: 28px; padding-left: 8px; gap: 9px; }
    .cmenu .lb { padding-top: 1px; }
    .cmenu .i .lb { padding-top: 2px; }
    .cmenu .keys { margin-left: auto; padding-right: 9px; font-size: 13px; color: #6d7077; }
    .cmenu .off .keys { color: #a8aab0; }
    .cmenu .hot { background: #e8ebf0; }
    .cmenu hr { border: 0; border-top: 1px solid #dfe3ec; margin: 4px 0; }
    .tri { margin-left: auto; border: 3px solid transparent; border-left: 4px solid #6b7690; border-right: 0; }
    .trib { margin-left: auto; border-left: 1px solid #dfe2e8; height: 12px; display: flex; align-items: center; padding-left: 9px; }
    .redarrow { position: absolute; z-index: 5; left: 366px; top: 292px; pointer-events: none; filter: drop-shadow(3px 2px 2px rgba(0,0,0,.5)); }
    .mouse { position: absolute; z-index: 5; left: 565px; top: 583px; pointer-events: none; }

    .scroll { display: flex; flex-direction: column; align-items: center; }
    .scroll .rt { height: 18px; }
    .track { flex: 1; width: 14px; background: #e7e9ef; display: flex; flex-direction: column; align-items: center; padding: 7px 0 4px; }
    .track .ic { fill: #8b98b3; stroke: none; }
    .thumb { width: 12px; height: 45px; border-radius: 6px; background: #cdd0d9; margin: 455px 0 auto; }
    .rrail { border-left: 2px solid #e1e4eb; padding: 11px 0 0 4px; display: flex; flex-direction: column; align-items: center; gap: 4px; }
    .rrail button { width: 32px; height: 32px; flex: none; }
    .grip { width: 20px; height: 4px; border: 1px solid #c6c9d0; border-width: 1px 0; margin-bottom: 9px; flex: none; }
    .rrail .hr { width: 100%; height: 1px; background: #dde1ea; margin: 4px 0; }
    .rrail .end { margin-top: auto; border-top: 1px solid #dde1ea; width: 100%; height: 44px; display: grid; place-items: end center; }

    .status { display: flex; align-items: center; border-top: 1px solid var(--line); padding: 1px 8px 0 10px; }
    .status .sep { width: 1px; height: 14px; background: #dcdfe6; }
    .status button { height: 24px; gap: 3px; }
    .status .cnt { padding-right: 6px; }
    .status .wc { padding: 0 6px 0 9px; }
    .status .hl { background: #e8f0fb; padding: 0 3px 0 4px; margin-left: 1px; }
    .status .cr { width: 11px; }
    .status .ck { padding-left: 4px; }
    .status .mf { margin-left: 21px; }
    .views { margin-left: auto; display: flex; align-items: center; gap: 3px; }
    .views button { width: 23px; border-radius: 2px; }
    .views .on { background: #d8dce4; }
    .views .sep { margin: 0 8px; }
    .zoom { display: flex; align-items: center; gap: 7px; padding-left: 5px; }
    .zoom .pct { gap: 6px; margin-right: 5px; }
    .zoom .sgn .ic { stroke-width: 2; }
    .zoom .scale { display: flex; align-items: center; gap: 4px; padding: 0 5px; }
    .zoom input { appearance: none; width: 146px; height: 14px; outline: 0; background: linear-gradient(90deg, #454f66 61px, #c9cedb 61px) center / 100% 1px no-repeat; }
    .zoom input::-webkit-slider-thumb { appearance: none; width: 12px; height: 12px; border-radius: 50%; border: 1px solid #4c5466; background: #f5f7fa; }
    .brand { position: absolute; z-index: 6; right: 11px; bottom: 7px; display: flex; align-items: flex-end; opacity: .86; pointer-events: none; }
    .brand p { margin: 0; }
    .brand .zh { color: #4d8fd3; font: 700 21px/24px "Noto Sans CJK SC", sans-serif; }
    .brand .en { color: #62bd79; font: 700 15px/20px "Liberation Sans", sans-serif; }
  `;

  private tool(x: Tool) {
    return html`<button class=${classMap({ tool: true, off: !!x.off })}>${ib(x.icon)}<span class="lab">${x.label}${x.drop ? caret : nothing}</span></button>`;
  }

  private small(x: Tool) {
    return html`<button class=${classMap({ off: !!x.off })}>${ic(x.icon)}<span class="lab">${x.label}${x.drop ? caret : nothing}</span></button>`;
  }

  private titlebar() {
    const mark = (fill: string, d: string) => html`<svg class="mono logo" aria-hidden="true" viewBox="0 0 16 16"><rect width="16" height="16" rx="2.500" fill=${fill}/><path d=${d} fill="none" stroke="#fff" stroke-width="1.800"/></svg>`;
    const doc = (on: boolean, logo: TemplateResult, name: string, dot: boolean) => html`
      <button class=${classMap({ tab: true, on })}>${logo}<span class="name">${name}</span><span class="screen">${ic("screen")}</span><i class=${classMap({ dot: true, none: !dot })}></i></button>`;
    return html`<header class="titlebar">
      <button class="tab home">首页</button>
      <button class="tab store"><svg class="logo" aria-hidden="true" width="16" height="16" viewBox="0 0 16 16"><path d="M1 0h7a8 8 0 0 1 0 16H3a2 2 0 0 1-2-2z" fill="#f5293b"/><path d="M8 13C5.500 10 6 6 9.500 3c1.500 4 1 7.500-1.500 10zM7 13.500C4 13 3 10.500 3.500 8 6 9 7 11 7 13.500zM9 13.500c.5-3 2-4.500 4-5 0 3-1.500 5-4 5z" fill="#fff"/></svg>找稻壳模板</button>
      ${doc(true, mark("#1f7df5", "M3 4v8l5-5 5 5V4"), "Word教程2.docx", true)}
      ${doc(false, mark("#1fb055", "M12.500 4H4v4h8v4H3.500"), "工作簿3.xlsx", true)}
      ${doc(false, mark("#f5791b", "M3 4.500h9.500v4.500H5v4"), "WPS PPT教程.pptx", false)}
      <button class="plus" aria-label="新建"><svg class="ic" width="12" height="12" viewBox="0 0 12 12"><path d="M6 0v12M0 6h12"/></svg></button>
      <div class="wm">
        <button aria-label="多窗口"><svg class="ic" width="25" height="16" viewBox="0 0 25 16"><path d="M.500 1.500h24v13H.500zM20 4.500h-3v8h3"/><text x="8" y="12" font-size="11" fill="#4a5a78" stroke="none">3</text></svg></button>
        <button aria-label="应用">${ic("apps")}</button>
        <div class="tail">
          <button class="login">立即登录<svg aria-hidden="true" width="20" height="20" viewBox="0 0 20 20"><circle cx="10" cy="10" r="10" fill="#a8740d"/><circle cx="10" cy="7.500" r="4.500" fill="#e2c99a"/><path d="M2.500 16c1.500-4 13.500-4 15 0a10 10 0 0 1-15 0z" fill="#e2c99a"/></svg></button>
          <div class="vr"></div>
          <div class="sysbtns"><button aria-label="最小化">${ic("min")}</button><button aria-label="最大化">${ic("max")}</button><button aria-label="关闭">${ic("close")}</button></div>
        </div>
      </div>
    </header>`;
  }

  private menubar() {
    return html`<nav class="menubar">
      <button class="file">${ic("burger")}文件</button><i class="vline"></i>
      <div class="quick">
        ${["save", "export", "print", "preview", "undo"].map((n) => html`<button class="q" aria-label=${n}>${ic(n)}</button>`)}
        <button class="q s" aria-label="undo list">${caret}</button>
        <button class="q" aria-label="redo">${ic("redo")}</button>
        <button class="q" aria-label="more">${ic("more")}</button>
      </div><i class="vline"></i>
      <div class="menutabs">
        ${["开始", "插入", "页面布局", "引用", "审阅", "视图", "章节", "开发工具", "会员专享"].map((n, i) => html`<button class=${classMap({ pill: n === "插入", long: i > 6 })}>${n}</button>`)}
      </div><i class="vline"></i>
      <div class="ctx"><button>表格工具</button><button>表格样式</button></div>
      <label class="find">${ic("search", 15)}<input type="text" aria-label="查找命令" placeholder="查找命令、搜索模板" /></label>
      <div class="cloudside">
        <button>${ic("cloud")}未上云</button><button>${ic("coop")}协作</button><button class="share">${ic("share")}分享</button>
        <i class="vline"></i><button aria-label="更多">${ic("kebab", 12)}</button><button aria-label="收起">${ic("up")}</button>
      </div>
    </nav>`;
  }

  private ribbonBar() {
    return html`<section class="ribbon">
      ${ribbon.map((g, i) => html`<div class=${classMap({ group: true, wide: i === 3 })}>${g.map((x) => Array.isArray(x) ? html`<div class="stack">${x.map((y) => this.small(y))}</div>` : this.tool(x))}</div>`)}
      <div class="cutoff">窗</div>
      <button class="scroller" aria-label="向右滚动"><svg class="ic" width="5" height="8" viewBox="0 0 5 8"><path d="M1 1l3 3-3 3"/></svg></button>
    </section>`;
  }

  private panel() {
    return html`<aside class="panel">
      <div class="phead"><h2>目录</h2><button aria-label="关闭目录">${ic("close", 15)}</button></div>
      <div class="ptools">
        <button class="sq" aria-label="展开"><svg class="ic" width="11" height="11" viewBox="0 0 11 11"><path d="M2.500 4l3 3 3-3"/></svg></button>
        <button class="sq" aria-label="折叠"><svg class="ic" width="11" height="11" viewBox="0 0 11 11"><path d="M2.500 7l3-3 3 3"/></svg></button>
        <button class="sq" aria-label="增加"><svg class="ic" width="11" height="11" viewBox="0 0 11 11"><path d="M3 5.500h5M5.500 3v5"/></svg></button>
        <button class="sq" aria-label="减少"><svg class="ic" width="11" height="11" viewBox="0 0 11 11"><path d="M3 5.500h5"/></svg></button>
        <button class="ai"><svg aria-hidden="true" width="14" height="12" viewBox="0 0 14 12"><rect width="14" height="12" rx="6" fill="#4d9bf3"/><path d="M2.500 6.500c.5-1.500 2-1.500 2.500 0M9 6.500c.5-1.500 2-1.500 2.500 0" stroke="#fff" fill="none" stroke-width="1.200"/></svg>智能识别目录</button>
      </div>
      <ul class="tree">
        ${tree.map((n) => html`<li class=${classMap({ l1: n.level === 1, l2: n.level === 2, sel: !!n.selected })}>${n.open ? html`<button aria-label="折叠节点"><svg class="ic" width="16" height="16" viewBox="0 0 16 16"><path d="M4 6l4 4 4-4"/></svg></button>` : nothing}<span>${n.open ? html`<span class="zh">${n.text.slice(0, 3)}</span>${n.text.slice(3)}` : n.text}</span></li>`)}
      </ul>
    </aside>`;
  }

  private vruler() {
    const ticks = Array.from({ length: 43 }, (_, i) => Math.round(42 + i * 19.55));
    const nums: [number, number][] = [[2, 53], ...Array.from({ length: 19 }, (_, i): [number, number] => [2 * (i + 1), Math.round(131 + i * 39.1)])];
    return html`<svg class="rul" width="19" height="869" aria-hidden="true">
      <rect x="3" y="91" width="16" height="778" fill="#e7eaf1"/>
      ${[151, 200, 249, 298, 349, 405].map((y) => svg`<rect x="3" y=${y} width="16" height="5" fill="#b4bcd2"/>`)}
      <path d="M7.500 12v5M7 16h6" stroke="#a3a8b4" stroke-width="2" fill="none"/>
      <path d="M3 91.500h16" stroke="#7c8699"/>
      ${ticks.map((y) => svg`<path d="M9 ${y + 0.5}h10" stroke="#7c8699"/>`)}
      ${nums.map(([n, y]) => svg`<text text-anchor="middle" transform="translate(14 ${y}) rotate(-90)">${n}</text>`)}
    </svg>`;
  }

  private hruler() {
    return html`<svg class="rul" width="1000" height="25" aria-hidden="true">
      <rect x="367" width="418" height="16" fill="#e7eaf1"/>
      ${[367, 469, 571, 672, 773].map((x) => svg`<rect x=${x} width="13" height="16" fill="#b4bcd2"/><path d="M${x + 3} 4.500h8M${x + 3} 7.500h8M${x + 3} 10.500h8" stroke="#3c465c" stroke-dasharray="1 1"/>`)}
      ${hMarks.map(([n, x]) => svg`<text x=${x} y="11" text-anchor="middle">${n}</text>`)}
      <path d="M579.500 .500h8v2l-4 4.500-4-4.500zM583.500 7l4 5v2h-8v-2zM579.500 15.500h8v5h-8zM668.500 14.500h8v-2l-4-4-4 4z" fill="#fff" stroke="#3c465c"/>
    </svg>`;
  }

  private mini() {
    const b = (n: string, c = false, act = false) => html`<button class=${classMap({ act })} aria-label=${n}>${ic(n)}${c ? caret : nothing}</button>`;
    return html`<div class="mini">
      <div class="mrows">
        <div class="mr">
          <label class="combo"><select aria-label="字体"><option>宋体</option></select>${caret}</label>
          <label class="combo s"><select aria-label="字号"><option>小四</option></select>${caret}</label>
          ${b("bigger")}${b("smaller")}${b("spacing", true)}
        </div>
        <div class="mr two">
          <button class="bold">B</button>${b("italic")}${b("underline", true)}${b("marker", true)}${b("fontcolor", true)}${b("bucket", true)}${b("borders", true)}${b("align", true, true)}${b("brush")}
        </div>
      </div>
      <div class="mbig">${this.tool(t("insertrow", "插入", true))}${this.tool(t("delrow", "删除", true))}</div>
    </div>`;
  }

  private cmenu() {
    return html`<ul class="cmenu">${menu.map((r) => r === null ? html`<li><hr /></li>` : html`<li>
      <button class=${classMap({ i: !!r.icon, off: !!r.off, hot: !!r.hot })}>${r.icon ? ic(r.icon) : nothing}<span class="lb">${r.label}</span>
        ${r.coin ? html`<svg aria-hidden="true" width="14" height="14" viewBox="0 0 14 14"><path d="M3.500 1h7L13.500 5 12 9.500 7 13 2 9.500.500 5z" fill="none" stroke="#f0a93a" stroke-width="1.200"/><path d="M9 4.500C8 3.500 5.500 3.800 5.500 5.200S9 6.500 9 8s-3 1.800-4 .6M7 3v7" fill="none" stroke="#f0a93a"/></svg>` : nothing}
        ${r.keys ? html`<span class="keys">${r.keys}</span>` : nothing}
        ${r.bar ? html`<span class="trib"><i class="tri"></i></span>` : r.sub ? html`<i class="tri"></i>` : nothing}</button></li>`)}</ul>`;
  }

  private sheet() {
    const plus = html`<svg class="ic" width="9" height="9" viewBox="0 0 9 9"><path d="M4.500 0v9M0 4.500h9"/></svg>`;
    return html`<article class="sheet">
      <i class="corner a"></i><i class="corner b"></i>
      <div class="tw">
        <table class="people">
          <thead><tr>${["编号", "姓名", "性别", "年龄"].map((h) => html`<th scope="col">${h}</th>`)}</tr></thead>
          <tbody>${people.map((r, i) => html`<tr class=${classMap({ h: i % 2 === 0 })}>${r.map((c) => html`<td>${c}</td>`)}</tr>`)}</tbody>
        </table>
        <button class="knob m" aria-label="移动表格">${ic("move", 14)}</button>
        <button class="knob r" aria-label="添加列">${plus}</button>
        <button class="knob b" aria-label="添加行">${plus}</button>
      </div>
      ${this.mini()}${this.cmenu()}
      <svg class="redarrow" aria-hidden="true" width="100" height="280" viewBox="0 0 100 280"><path d="M6.500 7L9 6 81.500 249l6-1-2 28-14-23 6.500-2.500z" fill="#f20a0a" stroke="#a80000" stroke-width=".5"/></svg>
      <svg class="mouse" aria-hidden="true" width="13" height="21" viewBox="0 0 13 21"><path d="M.800 1v15.500l3.600-3.300 2.600 6 2.600-1.200-2.600-5.600h5z" fill="#fff" stroke="#1b2233"/></svg>
    </article>`;
  }

  private status() {
    return html`<footer class="status">
      <span class="cnt">页面: 8/12</span><i class="sep"></i><span class="wc">字数: 2864</span><i class="sep"></i>
      <button class="hl">${ic("spell")}拼写检查</button><button class="cr" aria-label="拼写选项">${caret}</button><i class="sep"></i>
      <button class="ck">${ic("content")}内容检查</button><button class="cr" aria-label="检查选项">${caret}</button><i class="sep"></i>
      <button class="mf">${ic("missing")}缺失字体</button>
      <div class="views"><button aria-label="护眼">${ic("eye")}</button><i class="sep"></i>
        <button class="on" aria-label="页面视图">${ic("pageview")}</button>
        ${["listview", "book", "globe", "writer"].map((n) => html`<button aria-label=${n}>${ic(n)}</button>`)}<i class="sep"></i></div>
      <div class="zoom"><button aria-label="适合">${ic("fit")}</button><button class="pct">90%${caret}</button>
        <button class="sgn" aria-label="缩小"><svg class="ic" width="10" height="10" viewBox="0 0 10 10"><path d="M0 5h10"/></svg></button>
        <div class="scale"><input type="range" aria-label="缩放" min="0" max="100" value="41" />
          <button class="sgn" aria-label="放大"><svg class="ic" width="10" height="10" viewBox="0 0 10 10"><path d="M0 5h10M5 0v10"/></svg></button></div>
        <button aria-label="全屏">${ic("full")}</button></div>
    </footer>`;
  }

  render() {
    return html`<div class="root"><div class="behind"></div><div class="app">
      ${this.titlebar()}${this.menubar()}${this.ribbonBar()}
      <main class="work">
        <div class="rail">${["outline", "sections", "bookmark", "search"].map((n, i) => html`<button class=${classMap({ on: i === 0 })} aria-label=${n}>${ic(n)}</button>`)}</div>
        ${this.panel()}
        <div class="vruler">${this.vruler()}</div>
        <div class="canvas"><div class="hruler">${this.hruler()}</div>
          <div class="desk">${this.sheet()}
            <div class="side"><button class="ej" aria-label="收起">${ic("eject", 14)}</button><button class="dup"><span>${ic("paper")}</span>论文查重</button></div>
          </div>
        </div>
        <div class="scroll">
          <button class="rt" aria-label="标尺"><svg aria-hidden="true" width="10" height="12" viewBox="0 0 10 12"><rect width="10" height="12" rx="1.500" fill="#aab4cc"/><path d="M2.500 2h5v3h-5zM1.500 7h7v3h-7z" fill="#fff"/><path d="M4 8v2M6 8v2" stroke="#aab4cc"/></svg></button>
          <div class="track">
            <svg class="ic" width="6" height="4" viewBox="0 0 6 4"><path d="M0 4l3-4 3 4z"/></svg>
            <div class="thumb"></div>
            <svg class="ic" width="6" height="70" viewBox="0 0 6 70"><path d="M0 6h6L3 10zM0 26l3-4 3 4zM0 31l3-4 3 4zM1 42v4h4v-4zM0 41h6v6H0zM0 59h6l-3 4zM0 64h6l-3 4z" fill-rule="evenodd"/></svg>
          </div>
        </div>
        <div class="rrail"><i class="grip"></i>
          ${["rocket", "pen", "pointer", "sliders", "shop", "idea", "bookfind"].map((n) => html`<button aria-label=${n}>${ic(n)}</button>`)}
          <i class="hr"></i><button aria-label="album">${ic("album")}</button>
          <div class="end"><button aria-label="dots">${ic("dots")}</button></div>
        </div>
      </main>
      ${this.status()}</div>
      <div class="brand"><svg aria-hidden="true" width="44" height="42" viewBox="0 0 44 42">
        <defs><linearGradient id="b1" x1="0" y1="1" x2="1" y2="0"><stop offset="0" stop-color="#2c6fc4"/><stop offset="1" stop-color="#5cc0ee"/></linearGradient><linearGradient id="b2" x1="0" y1="1" x2="1" y2="0"><stop offset="0" stop-color="#f0d648"/><stop offset=".5" stop-color="#58b96a"/><stop offset="1" stop-color="#8ad47a"/></linearGradient></defs>
        <path d="M43 1C21 0 1 12 1 24c0 6 3 8 9 9C5 24 16 10 43 1z" fill="url(#b1)"/>
        <path d="M38 14c7 14-8 26-34 26 14-3 24-10 25-18-5-3-11-1-12 3 3-1 5 0 4 2-1 3-7 4-9 0-2-9 12-16 26-13z" fill="url(#b2)"/>
        <path d="M28 20c-7-3-13 0-14 6 3-2 7-2 7 1-1 4-9 4-9-2 0-8 10-11 16-5z" fill="#3f86d3"/></svg>
        <div><p class="zh">极光下载站</p><p class="en">www.xz7.com</p></div></div>
    </div>`;
  }
}
